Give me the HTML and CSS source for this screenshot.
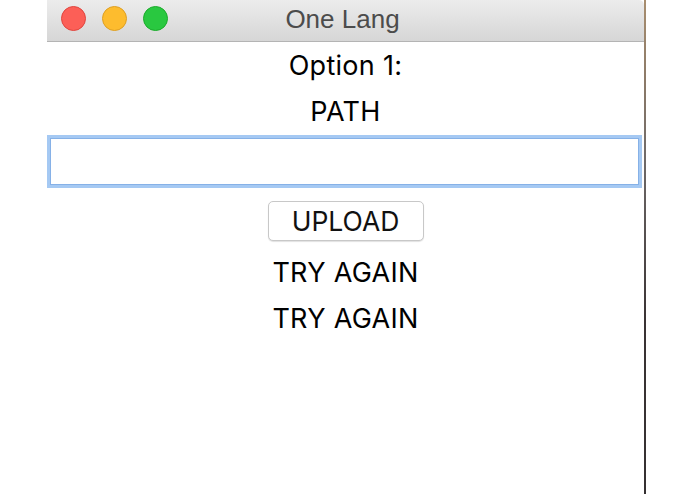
FILE: index.html
```html
<!DOCTYPE html>
<html>
<head>
<meta charset="utf-8">
<title>One Lang</title>
<link rel="stylesheet" href="styles.css">
</head>
<body>
<div class="screen">
  <div class="gutter"></div>
  <div class="window">
    <div class="titlebar">
      <div class="lights">
        <span class="light red"></span>
        <span class="light yellow"></span>
        <span class="light green"></span>
      </div>
      <div class="title">One Lang</div>
      <div class="spacer"></div>
    </div>
    <div class="content">
      <div class="label">Option 1:</div>
      <div class="label">PATH</div>
      <input class="field" type="text">
      <button class="btn">UPLOAD</button>
      <div class="label first">TRY AGAIN</div>
      <div class="label">TRY AGAIN</div>
    </div>
  </div>
  <div class="edge"></div>
</div>
</body>
</html>
```

FILE: styles.css
```css
html, body {
  margin: 0;
  padding: 0;
  background: #ffffff;
}

.screen {
  display: flex;
  height: 494px;
  overflow: hidden;
}

.gutter {
  width: 47px;
  flex: none;
}

.window {
  width: 597px;
  flex: none;
  display: flex;
  flex-direction: column;
  background: #ffffff;
}

.edge {
  width: 2px;
  flex: none;
  background: linear-gradient(#a88e6f 0px, #8c7a68 80px, #6f6a69 160px, #3a3334 320px, #353031 494px);
}

.titlebar {
  height: 41px;
  flex: none;
  border-bottom: 1px solid #b4b4b4;
  background: linear-gradient(#ececec, #d6d6d6);
  border-top-right-radius: 5px;
  display: grid;
  grid-template-columns: 1fr auto 1fr;
  align-items: center;
}

.lights {
  display: flex;
  gap: 16px;
  padding-left: 14px;
  padding-bottom: 4px;
}

.light {
  width: 25px;
  height: 25px;
  border-radius: 50%;
  box-sizing: border-box;
}

.red {
  background: #fc5f57;
  border: 1px solid #e0453e;
}

.yellow {
  background: #fdbc2e;
  border: 1px solid #de9f22;
}

.green {
  background: #29c840;
  border: 1px solid #1aab2a;
}

.title {
  font-family: "Liberation Sans", Arial, sans-serif;
  font-size: 26px;
  color: #4c4c4c;
  padding: 0 6px 2px 0;
}

.content {
  display: flex;
  flex-direction: column;
  align-items: center;
  font-family: Inter, "Liberation Sans", sans-serif;
}

.label {
  height: 46px;
  line-height: 48px;
  font-size: 27px;
  letter-spacing: 0.3px;
  color: #000000;
}

.label.first {
  margin-top: 8px;
}

.field {
  align-self: stretch;
  margin: 1px 2px 0 0;
  height: 53px;
  box-sizing: border-box;
  border: 3px solid #a5c9f3;
  box-shadow: inset 0 0 0 1px #86b1e7;
  outline: none;
  background: #ffffff;
  padding: 0;
}

.btn {
  margin-top: 13px;
  width: 156px;
  height: 40px;
  box-sizing: border-box;
  border: 1px solid #c8c8c8;
  border-radius: 5px;
  background: #ffffff;
  box-shadow: 0 1px 1px rgba(0, 0, 0, 0.12);
  font-family: Inter, "Liberation Sans", sans-serif;
  font-size: 26.5px;
  color: #111111;
  padding: 0;
}
```
